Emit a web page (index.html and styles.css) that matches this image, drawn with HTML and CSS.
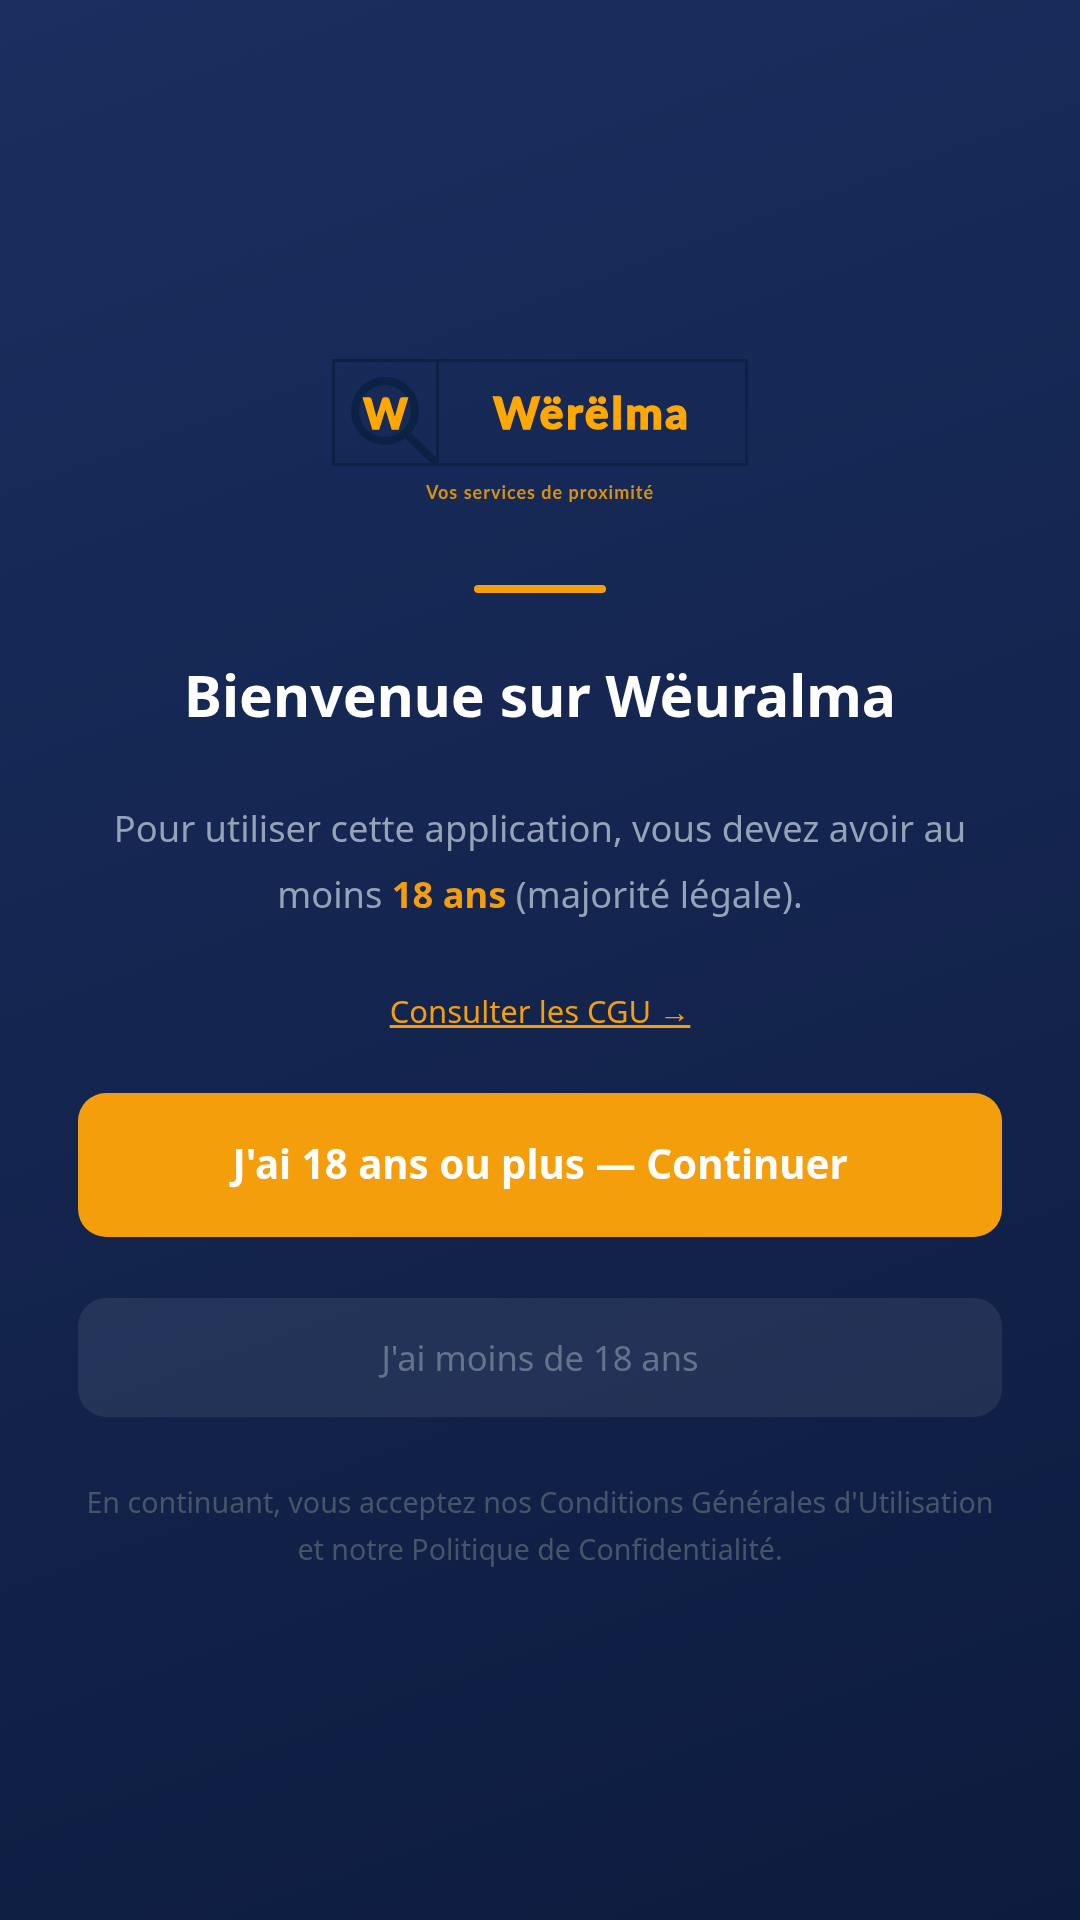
FILE: index.html
```html
<!DOCTYPE html>
<html lang="fr">
<head>
    <meta charset="UTF-8">
    <meta name="viewport" content="width=device-width, initial-scale=1.0">
    <title>Wëuralma</title>
    <link rel="stylesheet" href="styles.css">
</head>
<body>
    <main class="screen">
        <!-- Logo -->
        <div class="logo">
            <div class="logo-box">
                <div class="logo-mark">
                    <svg class="logo-glass" viewBox="0 0 104 104" width="104" height="104" aria-hidden="true">
                        <circle cx="50" cy="49" r="30" fill="none" stroke="#0b2244" stroke-width="8"/>
                        <path d="M71 71 L101 101" fill="none" stroke="#0b2244" stroke-width="8"/>
                    </svg>
                    <span class="logo-w">W</span>
                </div>
                <div class="logo-name">Wërëlma</div>
            </div>
            <div class="logo-tag">Vos services de proximité</div>
        </div>

        <div class="divider"></div>

        <h1>Bienvenue sur Wëuralma</h1>

        <p class="intro">Pour utiliser cette application, vous devez avoir au moins <strong>18 ans</strong> (majorité légale).</p>

        <a class="cgu-link" href="#">Consulter les CGU →</a>

        <button class="btn btn-primary">J'ai 18 ans ou plus — Continuer</button>
        <button class="btn btn-secondary">J'ai moins de 18 ans</button>

        <p class="legal">En continuant, vous acceptez nos Conditions Générales d'Utilisation et notre Politique de Confidentialité.</p>
    </main>
</body>
</html>
```

FILE: styles.css
```css
* {
    box-sizing: border-box;
}
body {
    margin: 0;
    font-family: "Noto Sans", "Open Sans", sans-serif;
    background: linear-gradient(160deg, #1a2e5f 0%, #0d1b3e 100%);
}
.screen {
    width: 1080px;
    height: 1920px;
    padding: 10px 78px 0;
    display: flex;
    flex-direction: column;
    align-items: center;
    justify-content: center;
    text-align: center;
    filter: blur(0.5px);
}
.logo {
    display: flex;
    flex-direction: column;
    align-items: center;
    filter: blur(0.6px);
}
.logo-box {
    width: 416px;
    height: 107px;
    display: flex;
    border: 3px solid #0b2244;
}
.logo-mark {
    width: 104px;
    height: 101px;
    position: relative;
    border-right: 3px solid #0b2244;
    display: flex;
    align-items: center;
    justify-content: center;
}
.logo-glass {
    position: absolute;
    left: 0;
    top: 0;
}
.logo-w {
    position: relative;
    font-family: "Lato", sans-serif;
    font-weight: 900;
    font-size: 42px;
    line-height: 1;
    color: #ffa800;
    -webkit-text-stroke: 1.5px #ffa800;
    margin-top: 1px;
}
.logo-name {
    flex: 1;
    font-family: "Lato", sans-serif;
    font-weight: 900;
    font-size: 44px;
    line-height: 101px;
    letter-spacing: 2.8px;
    color: #ffa800;
    -webkit-text-stroke: 1.5px #ffa800;
}
.logo-tag {
    margin-top: 14px;
    font-family: "Lato", sans-serif;
    font-weight: 700;
    font-size: 18px;
    line-height: 24px;
    letter-spacing: 1px;
    color: #d9920f;
}
.divider {
    width: 132px;
    height: 8px;
    margin-top: 81px;
    border-radius: 4px;
    background-color: #f59e0b;
}
h1 {
    margin: 64px 0 1px;
    font-size: 57px;
    font-weight: 700;
    line-height: 76px;
    color: #ffffff;
}
.intro {
    margin: 61px 0 0;
    font-size: 36.3px;
    line-height: 66px;
    color: #94a3b8;
}
.intro strong {
    font-weight: 700;
    color: #f59e0b;
}
.cgu-link {
    margin-top: 63px;
    font-size: 31px;
    line-height: 42px;
    color: #f59e0b;
    text-decoration: underline;
}
.btn {
    width: 100%;
    border: none;
    font-family: inherit;
    cursor: pointer;
}
.btn-primary {
    height: 144px;
    margin-top: 61px;
    padding-bottom: 3px;
    border-radius: 28px;
    background-color: #f59e0b;
    color: #ffffff;
    font-size: 40.3px;
    font-weight: 700;
}
.btn-secondary {
    height: 119px;
    margin-top: 61px;
    border-radius: 28px;
    background-color: rgba(255, 255, 255, 0.08);
    color: #64748b;
    font-size: 34.5px;
}
.legal {
    margin: 61px 0 0;
    font-size: 28.6px;
    line-height: 47px;
    color: #475569;
}
```
